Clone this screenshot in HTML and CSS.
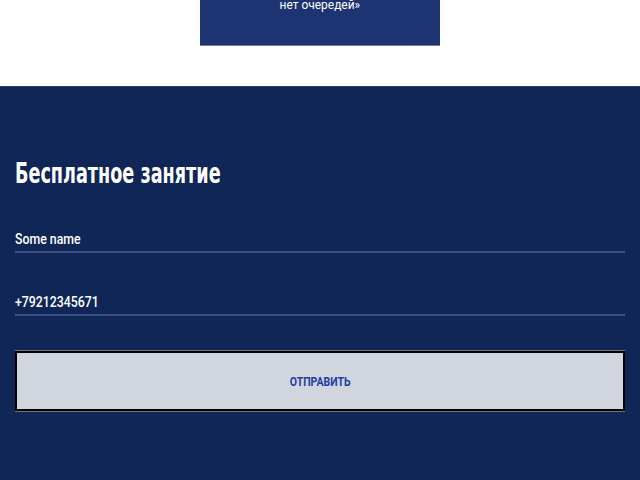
FILE: index.html
```html
<!DOCTYPE html>
<html lang="ru">
<head>
<meta charset="utf-8">
<link rel="stylesheet" href="styles.css">
</head>
<body>
<div class="top">
  <div class="card"><p class="card-text">нет очередей»</p></div>
</div>
<section class="form-section">
  <h2 class="title">Бесплатное занятие</h2>
  <form class="form">
    <div class="field"><span class="field-value">Some name</span></div>
    <div class="field"><span class="field-value">+79212345671</span></div>
    <button type="button" class="submit"><span class="submit-label">ОТПРАВИТЬ</span></button>
  </form>
</section>
</body>
</html>
```
FILE: styles.css
```css
html, body {
  margin: 0;
  padding: 0;
  background: #ffffff;
  font-family: Roboto, "Liberation Sans", sans-serif;
}
.top {
  height: 86px;
  display: flex;
  justify-content: center;
}
.card {
  width: 240px;
  height: 45px;
  background: #1e3371;
  border-bottom: 1px solid #6d7ca3;
  display: flex;
  justify-content: center;
  overflow: hidden;
}
.card-text {
  margin: -3px 0 0;
  color: #ffffff;
  font-size: 13px;
  line-height: 16px;
  display: inline-block;
  transform: scaleX(0.92);
}
.form-section {
  background: #0f2656;
  border-top: 1px solid #2c3f73;
  height: 393px;
  padding: 0 15px;
}
.title {
  margin: 0;
  padding-top: 71px;
  color: #ffffff;
  font-family: "DejaVu Sans Condensed", "DejaVu Sans", sans-serif;
  font-weight: 700;
  font-size: 28px;
  line-height: 32px;
  display: inline-block;
  white-space: nowrap;
  transform-origin: left center;
  transform: scaleX(0.70);
}
.form {
  display: flex;
  flex-direction: column;
  margin-top: 32px;
}
.field {
  height: 31px;
  border-bottom: 2px solid #3a5081;
  display: flex;
  align-items: flex-end;
  padding-bottom: 4px;
  box-sizing: border-box;
  margin-bottom: 32px;
}
.field-value {
  color: #ffffff;
  font-size: 14px;
  font-weight: 500;
  line-height: 16px;
  display: inline-block;
  transform-origin: left center;
  transform: scaleX(0.88);
}
.submit {
  margin-top: 3px;
  height: 60px;
  background: #d1d5dd;
  border: 2px solid #000000;
  box-shadow: 0 -1px 0 #6f7480, 0 1px 0 #6f7480;
  padding: 0;
}
.submit-label {
  display: inline-block;
  color: #1f3ca6;
  font-family: Roboto, "Liberation Sans", sans-serif;
  font-weight: 700;
  font-size: 12.5px;
  transform: scaleX(0.84);
}
```
